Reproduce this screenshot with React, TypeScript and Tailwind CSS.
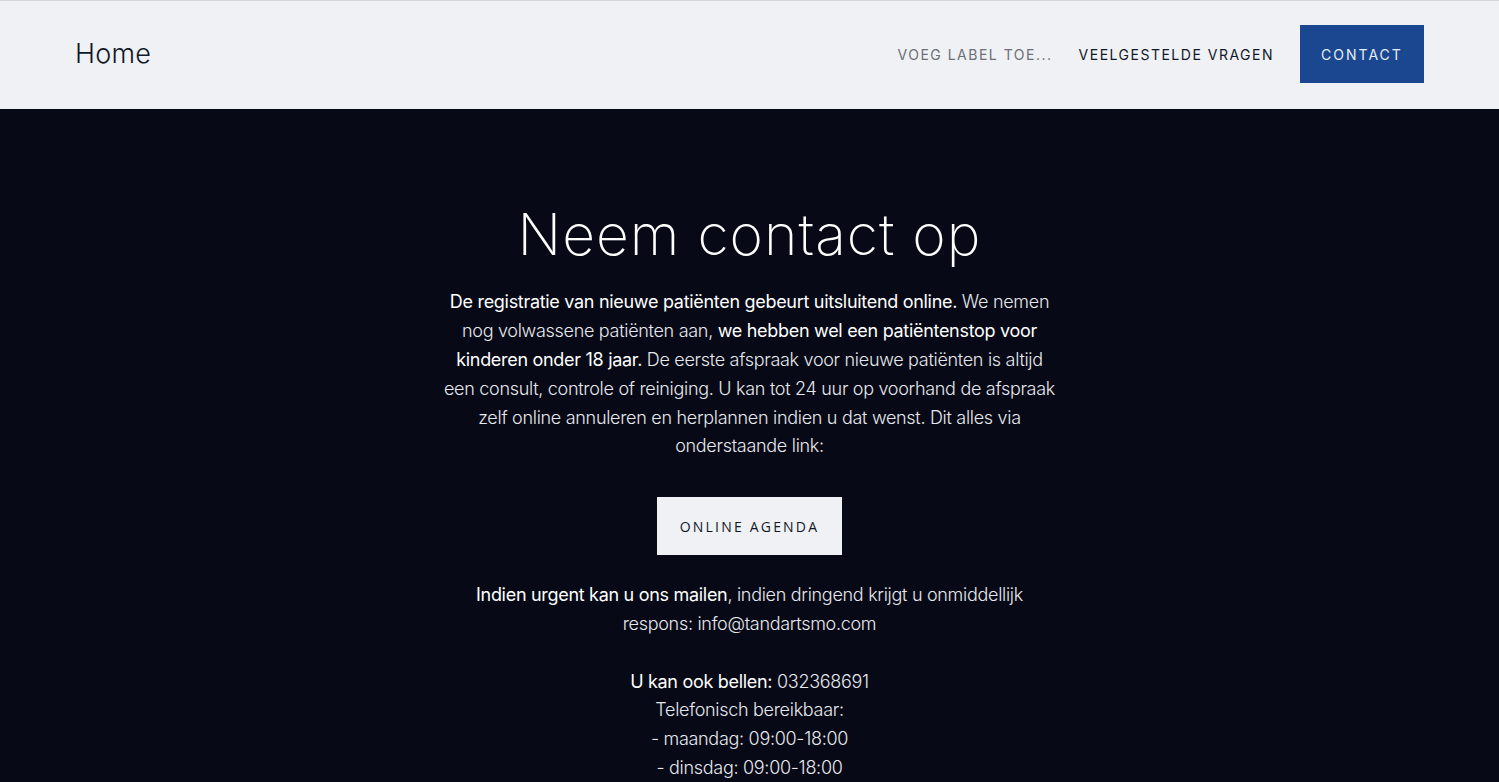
import React from 'react';

const sans = "font-['Inter','Noto_Sans',sans-serif]";

function Header() {
  return (
    <header className="h-[109px] bg-[#eff1f4] border-t border-[#d4d6da] flex items-center justify-between pl-[75px] pr-[75px] pb-[2px]">
      <a className="text-[27px] font-light text-[#111827] font-['Inter',sans-serif] tracking-[0.2px]">Home</a>
      <nav className={`flex items-center ${sans}`}>
        <a className="text-[14px] tracking-[1.5px] text-[#6b6f76] mr-[26px]">VOEG LABEL TOE...</a>
        <a className="text-[14px] tracking-[1.5px] text-[#111827] mr-[26px]">VEELGESTELDE VRAGEN</a>
        <a className="h-[58px] w-[124px] bg-[#1a4790] text-[#e6ecf5] text-[14px] tracking-[2px] flex items-center justify-center">
          CONTACT
        </a>
      </nav>
    </header>
  );
}

function B({ children }: { children: React.ReactNode }) {
  return <span className="font-normal text-white">{children}</span>;
}

export default function App() {
  return (
    <div className="min-h-[782px] bg-[#070a16]">
      <Header />
      <main className={`flex flex-col items-center text-center pt-[92px] pb-10 text-[#e6e8ee] ${sans}`}>
        <h1 className="text-[57px] font-extralight leading-[1.2] text-white tracking-[1px]">Neem contact op</h1>
        <p className="mt-[19px] text-[18px] leading-[28.8px] font-light tracking-[-0.3px]">
          <B>De registratie van nieuwe patiënten gebeurt uitsluitend online.</B> We nemen
          <br />
          nog volwassene patiënten aan, <B>we hebben wel een patiëntenstop voor</B>
          <br />
          <B>kinderen onder 18 jaar.</B> De eerste afspraak voor nieuwe patiënten is altijd
          <br />
          een consult, controle of reiniging. U kan tot 24 uur op voorhand de afspraak
          <br />
          zelf online annuleren en herplannen indien u dat wenst. Dit alles via
          <br />
          onderstaande link:
        </p>
        <a className="mt-[36px] h-[58px] w-[185px] bg-[#eff1f4] text-[#111827] text-[14px] tracking-[2.2px] flex items-center justify-center font-['Open_Sans',sans-serif]">
          ONLINE AGENDA
        </a>
        <p className="mt-[26px] text-[18px] leading-[28.8px] font-light tracking-[-0.3px]">
          <B>Indien urgent kan u ons mailen</B>, indien dringend krijgt u onmiddellijk
          <br />
          respons: info@tandartsmo.com
        </p>
        <p className="mt-[28.8px] text-[18px] leading-[28.8px] font-light tracking-[-0.3px]">
          <B>U kan ook bellen:</B> 032368691
          <br />
          Telefonisch bereikbaar:
          <br />
          - maandag: 09:00-18:00
          <br />
          - dinsdag: 09:00-18:00
        </p>
      </main>
    </div>
  );
}
